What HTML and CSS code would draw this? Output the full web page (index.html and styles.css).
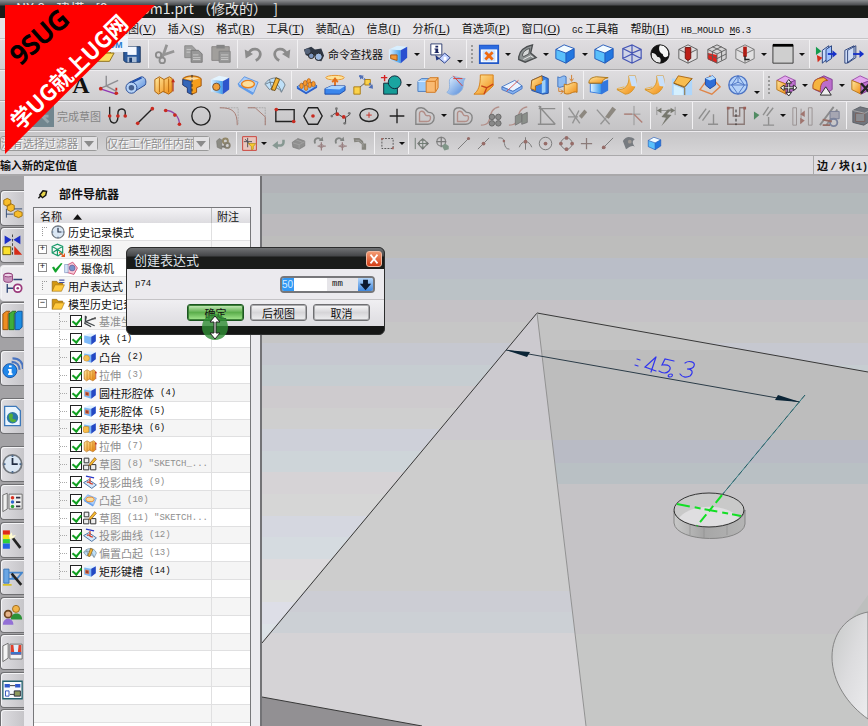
FILE: index.html
```html
<!DOCTYPE html>
<html lang="zh-CN">
<head>
<meta charset="utf-8">
<title>NX 8 - 建模</title>
<link rel="stylesheet" href="styles.css">
</head>
<body>
<svg class="defs" aria-hidden="true">
<defs>
<linearGradient id="gb" x1="0" y1="0" x2="1" y2="1"><stop offset="0" stop-color="#e4f3ff"/><stop offset="1" stop-color="#4a83d8"/></linearGradient>
<linearGradient id="go" x1="0" y1="0" x2="1" y2="1"><stop offset="0" stop-color="#ffe9a0"/><stop offset="1" stop-color="#f08a10"/></linearGradient>
<linearGradient id="gc" x1="0" y1="0" x2="1" y2="0"><stop offset="0" stop-color="#dff1ff"/><stop offset="1" stop-color="#3c9cec"/></linearGradient>
</defs>
<symbol id="open" viewBox="0 0 24 24"><path d="M2 20V5h7l2 3h8v3" fill="#e8b830" stroke="#8a6a10"/><path d="M2 20l5-9h16l-5 9z" fill="#fbdc62" stroke="#8a6a10"/></symbol>
<symbol id="save" viewBox="0 0 24 24"><path d="M3 4h18v17H5l-2-2z" fill="#2b5a9c" stroke="#17335e"/><path d="M7 4h10v9H7z" fill="#f4f8ff"/><path d="M7 15h10v6H7z" fill="#a9bdd6"/><path d="M9 16h3v5H9z" fill="#173a70"/></symbol>
<symbol id="cut" viewBox="0 0 24 24"><path d="M14 2L9 16M22 9L7 14" stroke="#959595" stroke-width="3" fill="none"/><circle cx="5" cy="13" r="3" fill="none" stroke="#8b8b8b" stroke-width="2"/><circle cx="9" cy="19" r="3" fill="none" stroke="#8b8b8b" stroke-width="2"/></symbol>
<symbol id="copy" viewBox="0 0 24 24"><path d="M3 3h8l4 4v9H3z" fill="#a0a0a0" stroke="#888"/><path d="M10 8h8l4 4v9H10z" fill="#989898" stroke="#777"/><path d="M5 7h5M5 10h4M12 13h6M12 16h8M12 18h8" stroke="#ccc"/></symbol>
<symbol id="paste" viewBox="0 0 24 24"><path d="M2 4h19v15H2z" fill="#a19f9c" stroke="#898785"/><path d="M7 2h9v4H7z" fill="#858585"/><path d="M10 9h12v12H10z" fill="#999" stroke="#828282"/><path d="M12 13h8M12 16h8M12 18h8" stroke="#c8c8c8"/></symbol>
<symbol id="undo" viewBox="0 0 24 24"><path d="M7 12C10 4 20 6 20 12c0 4-3 6-5 7" fill="none" stroke="#8b8b8b" stroke-width="3"/><path d="M3 7l1 10 8-5z" fill="#8b8b8b"/></symbol>
<symbol id="redo" viewBox="0 0 24 24"><path d="M17 12C14 4 4 6 4 12c0 4 3 6 5 7" fill="none" stroke="#8b8b8b" stroke-width="3"/><path d="M21 7l-1 10-8-5z" fill="#8b8b8b"/></symbol>
<symbol id="bino" viewBox="0 0 24 24"><path d="M1 7l8-3 4 3 7-1 3 8-3 6-5-1-3-6-5 2-4-2z" fill="#2f3744"/><circle cx="5" cy="9" r="3" fill="#55637a"/><circle cx="17" cy="15" r="4" fill="#9db9e0" stroke="#222"/><circle cx="9" cy="14" r="3" fill="#7b94bd" stroke="#222"/></symbol>
<symbol id="cubepart" viewBox="0 0 24 24"><path d="M2 7l9-4 11 1-7 4z" fill="#d8efff"/><path d="M2 7l13 1v14L2 18z" fill="url(#gc)"/><path d="M15 8l7-4v12l-7 6z" fill="#2a4fd0"/><path d="M4 13l7 0v6l-7-2z" fill="#f39a38" stroke="#a85410"/></symbol>
<symbol id="info" viewBox="0 0 24 24"><path d="M2 1h12v12H2z" fill="#fff" stroke="#28386c"/><path d="M7 3h3v2H7zM6 6h4v4h1v1H6v-1h1V7H6z" fill="#1a2560"/><path d="M11 17l6-6 6 5-6 6z" fill="#bfcfff" stroke="#223880"/><path d="M7 13l5 4-4 2z" fill="#223880"/><path d="M16 15h3v4h-3z" fill="#fff"/></symbol>
<symbol id="fit" viewBox="0 0 24 24"><path d="M2 3h20v19H2z" fill="#fff" stroke="#2258c8" stroke-width="2"/><path d="M2 3h20v4H2z" fill="#2c6ce0"/><path d="M5 8h14v12H5z" fill="#cfe4ff"/><path d="M8 10l8 8M16 10l-8 8" stroke="#f06a10" stroke-width="3"/></symbol>
<symbol id="persp" viewBox="0 0 24 24"><path d="M3 15C4 9 9 4 18 2l-2 9 6 5-12 5-7-3z" fill="#8d9293" stroke="#4b4e50" stroke-width="1.5"/><path d="M7 13c1-4 4-6 8-7l-1 6-6 3z" fill="#d6d8d9" stroke="#4b4e50"/><path d="M8 18l8-4 3 2" stroke="#eee" fill="none"/></symbol>
<symbol id="cube" viewBox="0 0 24 24"><path d="M2 7l9-5 11 4-9 5z" fill="#f2fbff"/><path d="M2 7l11 4v11L2 17z" fill="#5ac0fb"/><path d="M13 11l9-5v10l-9 6z" fill="#2277e0"/><path d="M2 7l9-5 11 4v10l-9 6-11-5zM2 7l11 4 9-5M13 11v11" fill="none" stroke="#1f57b8"/></symbol>
<symbol id="wire" viewBox="0 0 24 24"><path d="M2 6l10-4 10 5v10l-10 5L2 17zM2 6l10 5 10-4M12 11v11M12 2v10M2 17l10-5 10 5" fill="#c8d3f5" fill-opacity=".5" stroke="#4656b4" stroke-width="1.3"/></symbol>
<symbol id="bw" viewBox="0 0 24 24"><circle cx="12" cy="12" r="10" fill="#111"/><path d="M12 2a10 10 0 0 1 9 12c-3 3-6 1-6-2-4-1-5-6-3-10z" fill="#f5f5f5"/><path d="M3 11c3-1 5 2 6 4 3 0 5 3 3 7-6 0-10-5-9-11z" fill="#e8e8e8"/><circle cx="12" cy="12" r="10" fill="none" stroke="#111"/></symbol>
<symbol id="sec1" viewBox="0 0 24 24"><path d="M2 7l10-5 10 5v10l-10 5L2 17zM2 7l10 5 10-5M12 12v10" fill="#e1e0e1" stroke="#5b5b5b"/><path d="M9 5h6v12l-3 2-3-2z" fill="#bd2018" stroke="#6c100c"/></symbol>
<symbol id="sec2" viewBox="0 0 24 24"><path d="M2 7l10-5 10 5v10l-10 5L2 17z" fill="#d5d4d5"/><path d="M2 11l10 2v9L2 18z" fill="#e8201a"/><path d="M2 7l10-5 10 5v10l-10 5L2 17zM2 7l10 5 10-5M12 12v10M7 4l10 5v10M17 4L7 9v10M2 12l10 5 10-5" fill="none" stroke="#5b5b5b"/></symbol>
<symbol id="sec3" viewBox="0 0 24 24"><path d="M2 7l10-5 10 5v10l-10 5L2 17zM2 7l10 5 10-5M12 12v10" fill="#e1e0e1" stroke="#747474"/><path d="M10 4h4v11h-4z" fill="#b01c14"/><path d="M12 14v4h5" fill="none" stroke="#222" stroke-width="1.5"/></symbol>
<symbol id="swatch" viewBox="0 0 24 24"><path d="M1 2h22v20H1z" fill="#cfcfcf" stroke="#333"/><path d="M1 1h22v3H1z" fill="#000"/></symbol>
<symbol id="clip1" viewBox="0 0 24 24"><path d="M8 8l7-5v13l-7 6z" fill="#c9dcff" stroke="#223c78"/><path d="M12 7l6-4v14l-6 4z" fill="#9fc2ff" stroke="#223c78"/><path d="M14 12h6" stroke="#1530c8" stroke-width="2"/><path d="M19 8l5 4-5 4z" fill="#1530c8"/><path d="M1 4l6 5-6 4z" fill="#139a4c"/><path d="M2 13l6 3-5 5z" fill="#d42c1c"/></symbol>
<symbol id="clip2" viewBox="0 0 24 24"><path d="M2 8l10-5v13L4 22H2zM5 8v14M5 8l9-5v13l-9 6" fill="#cfdcf6" stroke="#2a4077"/><path d="M11 12h8" stroke="#1530c8" stroke-width="2"/><path d="M18 8l5 4-5 4z" fill="#1530c8"/></symbol>
<symbol id="axes" viewBox="0 0 24 24"><path d="M9 2v11l13-6M9 13L2 16M9 13l11 6" stroke="#8e8e92" stroke-width="1.5" fill="none"/><path d="M2 16l18 6" stroke="#9035b4" stroke-width="1.5"/><circle cx="3" cy="16" r="2" fill="#c92a20"/><circle cx="20" cy="21" r="2" fill="#c92a20"/><path d="M20 15v3" stroke="#c92a20" stroke-width="2"/></symbol>
<symbol id="pipe" viewBox="0 0 24 24"><path d="M5 9L18 3c4 0 6 5 4 9L9 20z" fill="url(#gb)" stroke="#234690"/><path d="M8 9l10-5" stroke="#1f4fae" stroke-width="2"/><ellipse cx="7" cy="15" rx="6" ry="6" fill="#b5d2f6" stroke="#234690"/><ellipse cx="7" cy="15" rx="3" ry="3" fill="#46608f"/></symbol>
<symbol id="extrude" viewBox="0 0 24 24"><path d="M2 6l5-3 5 3 6-3 3 2v14l-4 3-6-3-5 3-4-3z" fill="url(#go)" stroke="#a85e08"/><path d="M7 4v16M12 6v14M17 5v15" stroke="#b66a10"/><path d="M22 19V8" stroke="#c02a18"/><path d="M20 9l2-4 2 4z" fill="#c02a18"/></symbol>
<symbol id="revolve" viewBox="0 0 24 24"><path d="M2 5c4-4 16-4 20 0v8l-5 2v5l-5 2-5-2v-5l-5-3z" fill="#f69e1c" stroke="#9a4f08"/><path d="M2 6l9 2v14l-4-2v-5l-5-3z" fill="#3566b8" stroke="#20438c"/><path d="M4 5c4-2 12-2 16 0l-8 2z" fill="#fbd9a0"/><path d="M12 1v22" stroke="#222" stroke-dasharray="3 2"/></symbol>
<symbol id="hole" viewBox="0 0 24 24"><path d="M2 6l9-4 11 2-7 4z" fill="#e3f4ff"/><path d="M2 6l13 2v14L2 19z" fill="url(#gc)"/><path d="M15 8l7-4v13l-7 5z" fill="#2d55cc"/><circle cx="8" cy="14" r="4" fill="#f0a03a" stroke="#6c4a30"/></symbol>
<symbol id="emboss" viewBox="0 0 24 24"><path d="M1 11l7-8 15 6-5 12z" fill="#a8cdfb" stroke="#5b93de"/><path d="M1 11l17 10-1 2L2 14z" fill="#5f9cec"/><ellipse cx="12" cy="11" rx="7" ry="4" fill="#fddf9c" stroke="#e88020" stroke-width="1.5"/></symbol>
<symbol id="offset" viewBox="0 0 24 24"><path d="M1 11C5 3 19 1 23 12l-4 8c-2-5-9-7-13-3z" fill="#bfe0f8" stroke="#6c7c88"/><path d="M2 11c8-5 14 0 17 8M6 6l3 12" fill="none" stroke="#6c7c88"/><path d="M13 4l4 2-5 12-4-1z" fill="#f3b436" stroke="#6c4a10"/></symbol>
<symbol id="pattern" viewBox="0 0 24 24"><path d="M1 14l12-7 10 6-12 8z" fill="#8fc0fb" stroke="#2b62bc"/><path d="M1 14l10 6v2L1 16zM11 20l12-7v2l-12 7z" fill="#2d62cc"/><g fill="#f79a30" stroke="#b45c08" stroke-width=".7"><ellipse cx="6" cy="13" rx="2" ry="3"/><ellipse cx="10" cy="10" rx="2" ry="3"/><ellipse cx="11" cy="15" rx="2" ry="3"/><ellipse cx="14" cy="8" rx="2" ry="3"/><ellipse cx="15" cy="12" rx="2" ry="3"/><ellipse cx="19" cy="11" rx="2" ry="3"/></g></symbol>
<symbol id="scale" viewBox="0 0 24 24"><ellipse cx="12" cy="4" rx="10" ry="2.500" fill="#fce29a" stroke="#e79025"/><path d="M12 5v9M9 9l3-4 3 4" stroke="#e26d18" stroke-width="2" fill="none"/><path d="M1 16l7-3h15v5l-6 4H1z" fill="#3b86ec" stroke="#1b4aa8"/><path d="M1 16l7-3h15l-6 4z" fill="#a9d4ff"/></symbol>
<symbol id="move" viewBox="0 0 24 24"><path d="M9 14l6-5" stroke="#222" stroke-dasharray="2 1"/><path d="M2 14h7v8H2z" fill="#fbd24a" stroke="#a87a10"/><path d="M14 6h6v6h-6z" fill="#fbd24a" stroke="#a87a10"/><path d="M8 2l6 4M22 14l-3-4" stroke="#5070b8" stroke-width="2" stroke-dasharray="2 1"/><path d="M8 1l5 1-4 4zM23 16l-5-1 4-4z" fill="#5070b8"/></symbol>
<symbol id="unite" viewBox="0 0 24 24"><path d="M4 10h15v12H4z" fill="#159c97" stroke="#123"/><circle cx="16" cy="9" r="7" fill="#1aa5a0" stroke="#123"/><path d="M5 1v7M1 4h7" stroke="#d42020" stroke-width="1.500"/></symbol>
<symbol id="boxes" viewBox="0 0 24 24"><path d="M1 8l4-3h9v9l-3 5H1z" fill="#9ccaf8" stroke="#4678c0"/><path d="M1 8h11v11" fill="none" stroke="#e8f4ff"/><path d="M10 8l4-4h9v11l-3 5H10z" fill="#f9ba72" stroke="#d0761c"/><path d="M10 8h10v11M20 8l3-4" fill="none" stroke="#d0761c"/></symbol>
<symbol id="trim" viewBox="0 0 24 24"><path d="M5 6c4-6 9-1 17-1-4 5 0 9-5 14-5 5-10 5-15 1 5-4 2-9 3-14z" fill="url(#gb)" stroke="#8fb0dc"/><path d="M9 2l10 11M9 5h10" stroke="#da3a30" fill="none"/></symbol>
<symbol id="bend" viewBox="0 0 24 24"><path d="M8 1h14v12L12 22 1 22c5-4 7-9 7-21z" fill="url(#go)" stroke="#d47c10"/><path d="M9 13l6 2 7-4M15 15l-3 7" stroke="#c84418" fill="none" stroke-width="1.500"/></symbol>
<symbol id="split" viewBox="0 0 24 24"><path d="M1 14l14-7 8 6-10 6z" fill="#eaf3ff" stroke="#4877c4"/><path d="M1 14l12 5 10-6v3l-10 6-12-5z" fill="#85b2f2" stroke="#4877c4"/><path d="M6 19L19 7" stroke="#d6504c"/></symbol>
<symbol id="shell" viewBox="0 0 24 24"><path d="M3 7l11-5 7 3v16l-6 1-12-4z" fill="#3b7fe0" stroke="#204c9c"/><path d="M3 7l11-5 1 8-8 3v5l-5-2z" fill="url(#go)" stroke="#a46010"/><path d="M14 8l4-2v14l-4 1z" fill="#9ed0f8"/></symbol>
<symbol id="thick" viewBox="0 0 24 24"><path d="M2 3c3 3 5-3 9 0v11c-4-2-6 2-9 0z" fill="#8ebcf2" stroke="#3d70bc"/><path d="M9 11c5 3 8-4 14-1v10c-5-2-8 4-14 1z" fill="url(#go)" stroke="#bc7010"/><path d="M3 15v4h5M5 22l3-3-3-2M17 1v6M15 5l2 3 2-3" stroke="#d27c28" fill="none"/></symbol>
<symbol id="blend" viewBox="0 0 24 24"><path d="M2 9h13v13L2 20zM15 9l7-3v12l-7 4z" fill="#3277de"/><path d="M3 11h11v10l-11-2z" fill="url(#gc)"/><path d="M1 10c0-5 3-6 8-7l13 1c-4 1-6 2-7 6z" fill="url(#go)" stroke="#a87214"/></symbol>
<symbol id="sheet" viewBox="0 0 24 24"><path d="M14 2h7c3 10-3 20-11 20l-9-5c9 1 14-5 13-15z" fill="url(#go)" stroke="#d49428"/><path d="M14 2h7l2 12-6-1z" fill="#c9e0fb"/><path d="M1 16l8-2" stroke="#e8b050"/></symbol>
<symbol id="chamfer" viewBox="0 0 24 24"><path d="M1 5h22v18H1z" fill="#aed6fb"/><path d="M3 12l10 4v7H3z" fill="#d4f0ff"/><path d="M3 10L8 2l15 3-8 9z" fill="#f8bd50" stroke="#aa6512"/><path d="M3 10l12 5v8M15 14l8-9" stroke="#8a6020" fill="none"/></symbol>
<symbol id="draft" viewBox="0 0 24 24"><path d="M12 2L1 17l13 5 9-8z" fill="none" stroke="#df8548" stroke-width="1.500"/><path d="M7 5l8-3 3 3v7l-6 4-5-4z" fill="#2f6ed8" stroke="#1c48a0"/><path d="M7 5l8-3 3 3-6 2z" fill="#b5ddff"/></symbol>
<symbol id="globe" viewBox="0 0 24 24"><circle cx="12" cy="12" r="10" fill="#b5d2f8" stroke="#4d74c4" stroke-width="1.500"/><path d="M12 2L5 12l7 10 7-10zM2 12h20M5 12l7-3 7 3M12 9V2" fill="none" stroke="#4d74c4"/></symbol>
<symbol id="pcube" viewBox="0 0 24 24"><path d="M2 7l9-5 11 5-10 4z" fill="#e3a8ee" stroke="#9a4ca8"/><path d="M2 7l10 4v11L2 17z" fill="url(#go)" stroke="#b87414"/><path d="M12 11l10-4v10l-10 5z" fill="#c072d0" stroke="#803c90"/></symbol>
<symbol id="pmove" viewBox="0 0 24 24"><use href="#pcube"/><path d="M8 15h14M15 9v12" stroke="#222" stroke-width="3"/><path d="M9 15h12M15 10v10" stroke="#fff" stroke-width="1"/><path d="M15 6l3 4h-6zM15 24l3-4h-6zM6 15l4-3v6zM24 15l-4-3v6z" fill="#fff" stroke="#222"/></symbol>
<symbol id="pblend" viewBox="0 0 24 24"><path d="M3 7l10-5 9 4v11l-8 5L3 17z" fill="#bb6dcc" stroke="#803c90"/><path d="M1 12c1-6 6-8 12-8l4 3c-7 0-8 6-8 12l-8-3z" fill="#f6b440" stroke="#a8481c"/><path d="M15 14l6 9H9z" fill="#eee" stroke="#222"/></symbol>
<symbol id="pdel" viewBox="0 0 24 24"><use href="#pcube"/><path d="M12 10l10 11M22 10L12 21" stroke="#222" stroke-width="2.500"/></symbol>
<symbol id="fin" viewBox="0 0 24 24"><path d="M0 0h24v24H0z" fill="#71868f"/><path d="M5 17L17 5M5 6l13 13M5 12h13" stroke="#97a7ad" stroke-width="3"/></symbol>
<symbol id="profile" viewBox="0 0 24 24"><path d="M4 2v10c0 10 9 10 9 1V9c0-6 8-6 8-1v4" fill="none" stroke="#222" stroke-width="1.500"/><g fill="#c82a20"><circle cx="4" cy="12" r="2"/><circle cx="13" cy="12" r="2"/><circle cx="21" cy="12" r="2"/></g></symbol>
<symbol id="line" viewBox="0 0 24 24"><path d="M4 20L20 4" stroke="#222" stroke-width="1.500"/><circle cx="4" cy="20" r="2" fill="#c82a20"/><circle cx="20" cy="4" r="2" fill="#c82a20"/></symbol>
<symbol id="arc" viewBox="0 0 24 24"><path d="M4 6c9 0 15 7 15 15" fill="none" stroke="#9446a8" stroke-width="1.500"/><g fill="#c82a20"><circle cx="4" cy="6" r="2"/><circle cx="14" cy="11" r="2"/><circle cx="19" cy="21" r="2"/></g></symbol>
<symbol id="circle" viewBox="0 0 24 24"><circle cx="12" cy="12" r="10" fill="none" stroke="#222" stroke-width="1.500"/></symbol>
<symbol id="fillet" viewBox="0 0 24 24"><path d="M2 3h20v19" stroke="#aaa" fill="none" stroke-dasharray="2 1"/><path d="M2 3c14 0 19 4 19 19" stroke="#a5786e" fill="none"/></symbol>
<symbol id="cham2" viewBox="0 0 24 24"><path d="M2 3h19v19" stroke="#a5a5a5" fill="none" stroke-dasharray="2 1"/><path d="M2 3h8l11 10v9" stroke="#a5786e" fill="none"/></symbol>
<symbol id="rect" viewBox="0 0 24 24"><path d="M2 5h20v13H2z" fill="none" stroke="#222" stroke-width="1.500"/><circle cx="2.500" cy="5" r="2" fill="#c82a20"/><circle cx="21.500" cy="18" r="2" fill="#c82a20"/></symbol>
<symbol id="hex" viewBox="0 0 24 24"><path d="M7 3h10l5 9-5 9H7l-5-9z" fill="none" stroke="#222" stroke-width="1.500"/><circle cx="12" cy="12" r="2" fill="#c82a20"/></symbol>
<symbol id="spline" viewBox="0 0 24 24"><path d="M2 12c5-5 5-3 10 0s6 1 10-2M7 10V4M17 14v6" fill="none" stroke="#333"/><g fill="#c82a20"><circle cx="8" cy="10" r="2"/><circle cx="15" cy="13" r="2"/></g><g fill="#777"><circle cx="2" cy="12" r="1.500"/><circle cx="7" cy="4" r="1.500"/><circle cx="16" cy="20" r="1.500"/><circle cx="21" cy="9" r="1.500"/></g></symbol>
<symbol id="ellipse" viewBox="0 0 24 24"><ellipse cx="12" cy="11" rx="10" ry="7" fill="none" stroke="#222" stroke-width="1.500"/><path d="M12 8v6M9 11h6" stroke="#c82a20"/></symbol>
<symbol id="plus" viewBox="0 0 24 24"><path d="M12 4v16M4 12h16" stroke="#222" stroke-width="1.500"/></symbol>
<symbol id="curve" viewBox="0 0 24 24"><path d="M2 21V8c0-4 3-5 6-5 5 0 6 5 8 5s6 1 6 6-4 7-7 7z" fill="none" stroke="#858585" stroke-width="1.500"/><path d="M6 18V9c0-3 5-3 6 1s6-1 6 4-4 4-6 4z" fill="none" stroke="#b28e88" stroke-width="1.500"/></symbol>
<symbol id="pat2" viewBox="0 0 24 24"><path d="M1 22c16 0 4-17 20-20" stroke="#b28e88" fill="none" stroke-width="1.500"/><g fill="#898989" stroke="#666"><circle cx="13" cy="13" r="3"/><circle cx="20" cy="13" r="3"/><circle cx="13" cy="20" r="3"/><circle cx="20" cy="20" r="3"/></g></symbol>
<symbol id="proj" viewBox="0 0 24 24"><path d="M1 22c16 0 4-17 20-20" stroke="#b28e88" fill="none" stroke-width="1.500"/><path d="M8 12l7-3v9l-7 4zM15 11l6-3v11l-6 2z" fill="#8a8f8a" stroke="#777"/></symbol>
<symbol id="inter" viewBox="0 0 24 24"><path d="M3 4h18M5 1v20M2 21h19M3 1l18 20" stroke="#8c8c8c" fill="none" stroke-width="1.500"/></symbol>
<symbol id="ctrim" viewBox="0 0 24 24"><path d="M2 3l12 17M1 13h11M13 6L6 20" stroke="#949494" fill="none" stroke-width="1.500"/><path d="M13 12l6-7 3 3-6 7z" fill="#8d8880"/></symbol>
<symbol id="cext" viewBox="0 0 24 24"><path d="M2 5l14 16M12 14L6 21" stroke="#949494" fill="none" stroke-width="1.500"/><path d="M11 13l8-11 4 3-8 10z" fill="#8d8880"/></symbol>
<symbol id="corner" viewBox="0 0 24 24"><path d="M2 10h17M12 1v21" stroke="#949494" fill="none"/><path d="M12 10l9 9M1 10h9" stroke="#b08078" stroke-width="1.500"/></symbol>
<symbol id="dim" viewBox="0 0 24 24"><path d="M2 2v9M22 2v9M3 6h18" stroke="#8f8f8f"/><path d="M2 6l5-3v6zM22 6l-5-3v6zM14 5L7 13l5 1-5 9 11-12-5-1 5-5z" fill="#77786f"/></symbol>
<symbol id="cons" viewBox="0 0 24 24"><path d="M2 15L10 4M6 17L14 6M18 10v11M12 21h11" stroke="#8f8f8f" fill="none" stroke-width="1.500"/></symbol>
<symbol id="symm" viewBox="0 0 24 24"><path d="M3 3v18h18V3h-5v9H9V3z" fill="none" stroke="#8b7b78" stroke-width="1.500"/><path d="M12 5v17" stroke="#222" stroke-dasharray="3 2"/><path d="M2 2h3v3H2zM20 2h3v3h-3z" fill="#9c5f58"/></symbol>
<symbol id="showc" viewBox="0 0 24 24"><path d="M1 7l6 4-6 5z" fill="#508b62"/><path d="M11 11L17 2M15 12l7-9M17 13v9M11 22h12" stroke="#8f8f8f" fill="none" stroke-width="1.500"/></symbol>
<symbol id="auto" viewBox="0 0 24 24"><path d="M2 3v19M6 3v19M19 3v19M23 3v19" stroke="#989090"/><path d="M2 3h4M2 22h4M19 3h4M19 22h4M11 4v16" stroke="#989090"/><path d="M15 6l-5 4 5 3zM10 14l5 3-5 4z" fill="#a0756f"/></symbol>
<symbol id="anim" viewBox="0 0 24 24"><path d="M1 22L16 2M8 22L20 5" stroke="#8c8c8c" stroke-width="2"/><path d="M12 7h10v8H12z" fill="#a6a6b2" stroke="#777d95"/><circle cx="16" cy="19" r="4" fill="none" stroke="#7b839d" stroke-width="2"/><path d="M4 16l10 2M4 22h8" stroke="#956d66" stroke-width="2"/></symbol>
<symbol id="gcube" viewBox="0 0 24 24"><path d="M2 6l8-4 12 3v12l-8 5L2 19z" fill="#71757d" stroke="#5b5f66"/><path d="M5 9h10v9H5z" fill="#8b8d92" stroke="#775f5b"/><path d="M2 6l13 3 7-4" stroke="#aaa" fill="none"/></symbol>
<symbol id="gblob" viewBox="0 0 24 24"><path d="M2 10l9-6 11 4v8l-9 5-10-3z" fill="#8f8f8f" stroke="#777"/><path d="M3 11l10 3 9-5M13 14v7M8 6l10 4" stroke="#aaa" fill="none"/></symbol>
<symbol id="snapmap" viewBox="0 0 24 24"><path d="M1 8l4-4 4 2v15l-7-3z" fill="#8b8b84" stroke="#77756e"/><circle cx="15" cy="8" r="4" fill="none" stroke="#918668" stroke-width="3"/><circle cx="18" cy="15" r="4" fill="none" stroke="#857f70" stroke-width="3"/><path d="M9 17h6" stroke="#77756e" stroke-width="3"/></symbol>
<symbol id="filter" viewBox="0 0 24 24"><path d="M1 1h22v22H1z" fill="#e7c5bd" stroke="#cb4038" stroke-width="1.500"/><path d="M9 3v15M3 9h13M5 5l8 9" stroke="#4c5058" stroke-width="1.500"/><path d="M10 12h12l-4 5v4l-3 1v-5z" fill="#f6ca30" stroke="#ae8610"/></symbol>
<symbol id="gback" viewBox="0 0 24 24"><path d="M20 6c1 10-4 10-11 9" fill="none" stroke="#869892" stroke-width="4"/><path d="M2 15l9-7v13z" fill="#869892"/></symbol>
<symbol id="grot" viewBox="0 0 24 24"><path d="M5 12C2 4 10 1 14 6" fill="none" stroke="#828583" stroke-width="3"/><path d="M11 8h7l-1-7z" fill="#828583"/><path d="M15 10v13M9 16h13" stroke="#998081" stroke-width="2"/><circle cx="15" cy="16" r="3" fill="none" stroke="#998081"/></symbol>
<symbol id="ghook" viewBox="0 0 24 24"><path d="M1 3h9l6 5 1 4h4v10h-7v-9l-5-4-7 1z" fill="#86857e"/><path d="M4 7h6l6 6v5" stroke="#aaa" fill="none"/></symbol>
<symbol id="marq" viewBox="0 0 24 24"><path d="M3 4h18v16H3z" fill="none" stroke="#555" stroke-width="1.500" stroke-dasharray="3 2"/><path d="M2 3h3v3H2zM19 18h3v3h-3z" fill="#a36860"/></symbol>
<symbol id="target" viewBox="0 0 24 24"><path d="M14 3l4 4h-8zM14 22l4-4h-8zM5 12l4-4v8zM24 12l-4-4v8z" fill="#707272"/><circle cx="14" cy="12" r="6" fill="none" stroke="#7b817b" stroke-width="2"/><path d="M14 7v11M8 12h12M2 3v18" stroke="#6c7a70" stroke-width="1.500"/></symbol>
<symbol id="target2" viewBox="0 0 24 24"><circle cx="10" cy="9" r="7" fill="none" stroke="#858585" stroke-width="2"/><path d="M10 1v17M2 9h16" stroke="#7b7b7b" stroke-width="2"/><path d="M11 16l5-4 6 4v5l-7 2z" fill="#809688"/></symbol>
<symbol id="send" viewBox="0 0 24 24"><path d="M3 21L20 4" stroke="#777" stroke-width="1.500"/><circle cx="20" cy="4" r="2.500" fill="#966c68"/></symbol>
<symbol id="smid" viewBox="0 0 24 24"><path d="M3 21L21 3" stroke="#777" stroke-width="1.500"/><circle cx="12" cy="12" r="3" fill="#966c68"/></symbol>
<symbol id="son" viewBox="0 0 24 24"><path d="M3 21L21 3" stroke="#777" stroke-width="1.500"/><circle cx="6" cy="18" r="3" fill="#966c68"/></symbol>
<symbol id="stan" viewBox="0 0 24 24"><path d="M2 3h4c9 0 2 18 14 18" fill="none" stroke="#777" stroke-width="1.500"/><circle cx="11" cy="8" r="2" fill="#966c68"/></symbol>
<symbol id="sint" viewBox="0 0 24 24"><path d="M2 18c4-12 16-12 20 0M12 2v20" fill="none" stroke="#777" stroke-width="1.500"/><circle cx="12" cy="9" r="3" fill="#966c68"/></symbol>
<symbol id="scen" viewBox="0 0 24 24"><circle cx="12" cy="12" r="10" fill="none" stroke="#777" stroke-width="1.500"/><circle cx="12" cy="12" r="3" fill="#966c68"/></symbol>
<symbol id="squad" viewBox="0 0 24 24"><circle cx="12" cy="12" r="9" fill="none" stroke="#777" stroke-width="1.500"/><g fill="#966c68"><circle cx="12" cy="3" r="3"/><circle cx="12" cy="21" r="3"/><circle cx="3" cy="12" r="3"/><circle cx="21" cy="12" r="3"/></g></symbol>
<symbol id="spt" viewBox="0 0 24 24"><path d="M12 3v18M3 12h18" stroke="#8b7b79" stroke-width="2"/></symbol>
<symbol id="sface" viewBox="0 0 24 24"><path d="M3 8c5-9 13-7 19-3-6 4-2 9 0 12-8-3-9 3-14 4z" fill="#777b80"/><circle cx="14" cy="9" r="3" fill="#a09a95"/></symbol>
<symbol id="clock" viewBox="0 0 24 24"><circle cx="12" cy="12" r="10.500" fill="#dbe7f4" stroke="#71767c" stroke-width="2"/><path d="M12 5v7h6" stroke="#222e44" stroke-width="2" fill="none"/><path d="M12 2v2M12 20v2M2 12h2M20 12h2" stroke="#48678c" stroke-width="2"/></symbol>
<symbol id="views" viewBox="0 0 24 24"><path d="M2 6l9-4 9 4v11l-8 5-10-5zM2 6l9 5 9-5M11 11v11M2 17l9-6 9 6" fill="none" stroke="#199a68" stroke-width="2"/><path d="M14 16l9 7M23 18v5h-5" stroke="#e25a20" stroke-width="2" fill="none"/></symbol>
<symbol id="camera" viewBox="0 0 24 24"><path d="M3 8l12-6 8 10-6 11-14-4z" fill="#f8c8d6" stroke="#cb4b70" stroke-width="1.500"/><path d="M1 6h6v14H1z" fill="#d6e3f6" stroke="#7590bd"/><circle cx="14" cy="12" r="5" fill="#7893c9" stroke="#654a8c"/></symbol>
<symbol id="tick" viewBox="0 0 24 24"><path d="M2 12l4-2 3 5L20 3l3 1L10 22H8z" fill="#12a32c"/></symbol>
<symbol id="folder" viewBox="0 0 24 24"><path d="M2 21V4h8l2 3h8v4" fill="#d29712" stroke="#8a5d08"/><path d="M2 21l5-11h16l-5 11z" fill="#ffc93c" stroke="#9c6c0c"/></symbol>
<symbol id="folder2" viewBox="0 0 24 24"><use href="#folder"/><path d="M14 1h9v2h-9zM14 5h9v2h-9z" fill="#4450a0"/></symbol>
<symbol id="csys" viewBox="0 0 24 24"><path d="M4 3v10l16 7M4 13l17-6M6 4l-3 12 11 6" fill="none" stroke="#3e4448" stroke-width="2"/><path d="M12 9l10-4v4z" fill="#555"/></symbol>
<symbol id="fcube" viewBox="0 0 24 24"><path d="M2 6l9-4 11 2-8 4z" fill="#e0f2ff"/><path d="M2 6l12 2v14L2 18z" fill="#7cb8f8"/><path d="M14 8l8-4v12l-8 6z" fill="#2349c4"/></symbol>
<symbol id="fboss" viewBox="0 0 24 24"><use href="#fcube"/><circle cx="6" cy="14" r="5" fill="#f5c052" stroke="#d98f20"/></symbol>
<symbol id="fpock" viewBox="0 0 24 24"><use href="#fcube"/><path d="M4 10l6 1v6l-6-1z" fill="#a63f28" stroke="#f09060"/></symbol>
<symbol id="fpad" viewBox="0 0 24 24"><use href="#fcube"/><path d="M0 11l3-2 7 1v9l-7 1-3-2z" fill="#f9bd48" stroke="#b97b14"/></symbol>
<symbol id="sketch" viewBox="0 0 24 24"><path d="M2 2h8v8H2zM1 14h9v8H1zM13 13h9v9h-9z" fill="#eee" stroke="#333" stroke-width="1.700"/><path d="M11 12l9-11 3 3-9 10-4 1z" fill="#f6bd2e" stroke="#7a3a10"/></symbol>
<symbol id="pcurve" viewBox="0 0 24 24"><path d="M1 13l9-5 13 9-8 6z" fill="#d5e8fb" stroke="#3e679c" stroke-width="1.500"/><path d="M5 2l14 3" stroke="#2836c4" stroke-width="2"/><path d="M12 5v8M7 13c3-4 5 4 10 2" stroke="#d33d28" stroke-width="2" fill="none"/></symbol>
<symbol id="tasm" viewBox="0 0 24 24"><path d="M2 3l4-2 4 2v5l-4 2-4-2zM6 9l4-2 4 2v5l-4 2-4-2z" fill="#f8bd2a" stroke="#9c6a08"/><path d="M5 13v10M5 19h8M14 13h9" stroke="#27406c"/><path d="M14 17l4-2 5 2v4l-4 2-5-2z" fill="#f8bd2a" stroke="#9c6a08"/></symbol>
<symbol id="tcon" viewBox="0 0 24 24"><path d="M3 1l8 5-8 5zM21 1l-8 5 8 5z" fill="#1d2fc6"/><path d="M12 0v24" stroke="#333" stroke-dasharray="3 2"/><path d="M1 14h9v9H1z" fill="#fbe02c" stroke="#605008"/><path d="M14 23V13l9 10z" fill="#d62c18"/></symbol>
<symbol id="tpart" viewBox="0 0 24 24"><path d="M2 3c0-3 10-3 10 0v6c0 3-10 3-10 0z" fill="#c995bd" stroke="#8c3672"/><ellipse cx="7" cy="3" rx="5" ry="2" fill="#efd3e8" stroke="#8c3672"/><path d="M6 13v10M6 18h7M13 8h10" stroke="#2d4574" stroke-width="1.500"/><circle cx="18" cy="18" r="4.500" fill="#fff" stroke="#9b3a7c" stroke-width="2"/><circle cx="18" cy="18" r="1.500" fill="#9b3a7c"/></symbol>
<symbol id="tbooks" viewBox="0 0 24 24"><path d="M1 5l4-3h4l-2 3v18H1z" fill="#ef8d22" stroke="#8c4b08"/><path d="M8 5l4-3h4l-2 3v18H8z" fill="#3fae3a" stroke="#1c6418"/><path d="M15 5l3-3h5v18l-3 3h-5z" fill="#1c8de4" stroke="#0c4c90"/></symbol>
<symbol id="tinfo" viewBox="0 0 24 24"><path d="M11 5c6 0 9 4 9 9M12 1c8 0 12 5 12 12" fill="none" stroke="#4a74c0" stroke-width="2.500"/><circle cx="9" cy="15" r="8" fill="#2186e8" stroke="#0e4ea4"/><path d="M8 9h3v2H8zM7 13h4v5h1v2H7v-2h1v-3H7z" fill="#fff"/></symbol>
<symbol id="tweb" viewBox="0 0 24 24"><path d="M3 1h13l5 5v17H3z" fill="#eaf5ff" stroke="#3c78ba" stroke-width="1.500"/><circle cx="12" cy="14" r="6.500" fill="#2c78a8"/><path d="M8 10c5-3 5 2 4 4s5 1 4 4c-6 4-9-3-8-8z" fill="#55b038"/></symbol>
<symbol id="tpal" viewBox="0 0 24 24"><path d="M1 4l5-2v18l-5 3zM8 3h15v17H8z" fill="#efefef" stroke="#666"/><circle cx="12" cy="7" r="2" fill="#d83222"/><circle cx="12" cy="12" r="2" fill="#2d66d0"/><circle cx="12" cy="17" r="2" fill="#2ca038"/><path d="M16 7h5M16 12h5M16 17h5" stroke="#334" stroke-width="2"/></symbol>
<symbol id="twand" viewBox="0 0 24 24"><path d="M1 1h8v5H1z" fill="#e02818"/><path d="M1 6h8v5H1z" fill="#f6e31a"/><path d="M1 11h8v5H1z" fill="#2fcf3c"/><path d="M1 16h8v6H1z" fill="#2462e4"/><path d="M11 8l10 13" stroke="#222" stroke-width="3"/><path d="M11 3l1 4 4-1-3 4-4 1-1-4z" fill="#fffbd2"/></symbol>
<symbol id="tmach" viewBox="0 0 24 24"><path d="M2 3h6v16H2z" fill="#6aa6e4" stroke="#3370b4"/><path d="M8 7h15l-6 7H8M12 8v6" fill="none" stroke="#4686cc" stroke-width="2"/><path d="M11 8l11 13" stroke="#222" stroke-width="3"/><path d="M1 21h10" stroke="#d8c22a" stroke-width="2"/></symbol>
<symbol id="tusers" viewBox="0 0 24 24"><circle cx="16" cy="5" r="4" fill="#f2b54a" stroke="#9b6514"/><path d="M10 17c0-9 13-9 13 0z" fill="#2c9238"/><circle cx="7" cy="11" r="4" fill="#e6b48a" stroke="#6e4620" stroke-width="2"/><path d="M1 23c0-9 12-9 12 0z" fill="#9370d6"/></symbol>
<symbol id="tbook" viewBox="0 0 24 24"><path d="M1 5l6-3v17l-6 4zM9 3h14v17H9z" fill="#f4f4f4" stroke="#666"/><path d="M10 4h12v11H10z" fill="#e0402c"/><path d="M13 4h6l-1 9h-4z" fill="#dfeefc"/><path d="M10 12h12v3H10z" fill="#3c74c8"/></symbol>
<symbol id="tgrid" viewBox="0 0 24 24"><path d="M1 2h22v20H1z" fill="#f7fafc" stroke="#23606c" stroke-width="1.500"/><path d="M3 5h6v4H3zM15 5h6v4h-6z" fill="#3158cc"/><path d="M9 7h6M9 17h5" stroke="#222"/><path d="M4 13h4v6H4z" fill="#fff" stroke="#2448b8"/><path d="M14 13h7v6h-7z" fill="#8d9a5c" stroke="#223"/></symbol>
</svg>

<div class="app">
<header class="title"><h1>NX 8 - 建模 - [9sug.com1.prt （修改的）&nbsp; ]</h1></header>
<nav class="menu">
<a href="#">视图<i>(<u>V</u>)</i></a><a href="#">插入<i>(<u>S</u>)</i></a><a href="#">格式<i>(<u>R</u>)</i></a><a href="#">工具<i>(<u>T</u>)</i></a><a href="#">装配<i>(<u>A</u>)</i></a><a href="#">信息<i>(<u>I</u>)</i></a><a href="#">分析<i>(<u>L</u>)</i></a><a href="#">首选项<i>(<u>P</u>)</i></a><a href="#">窗口<i>(<u>O</u>)</i></a><a href="#"><b>GC</b> 工具箱</a><a href="#">帮助<i>(<u>H</u>)</i></a><a href="#"><b>HB_MOULD <u>M</u>6.3</b></a>
</nav>

<div class="bar one">
<button aria-label="打开"><svg><use href="#open"/></svg></button><button aria-label="保存"><svg><use href="#save"/></svg></button><s></s>
<button aria-label="剪切"><svg><use href="#cut"/></svg></button><button aria-label="复制"><svg><use href="#copy"/></svg></button><button aria-label="粘贴"><svg><use href="#paste"/></svg></button><s></s>
<button aria-label="撤消"><svg><use href="#undo"/></svg></button><button aria-label="重做"><svg><use href="#redo"/></svg></button><s></s>
<button aria-label="查找"><svg><use href="#bino"/></svg></button><span class="finder">命令查找器</span><button aria-label="部件"><svg><use href="#cubepart"/></svg></button><em></em><s></s>
<button aria-label="信息"><svg><use href="#info"/></svg></button><em class="low"></em><s></s><s class="grip"></s>
<button aria-label="适合窗口"><svg><use href="#fit"/></svg></button><em></em><button aria-label="透视"><svg><use href="#persp"/></svg></button><em></em><button aria-label="定向"><svg><use href="#cube"/></svg></button><em></em>
<button aria-label="着色"><svg><use href="#cube"/></svg></button><button aria-label="线框"><svg><use href="#wire"/></svg></button><button aria-label="艺术外观"><svg><use href="#bw"/></svg></button><button aria-label="面分析"><svg><use href="#sec1"/></svg></button><button aria-label="局部着色"><svg><use href="#sec2"/></svg></button><button aria-label="截面"><svg><use href="#sec3"/></svg></button><em></em>
<button aria-label="背景"><svg><use href="#swatch"/></svg></button><em></em><s></s><button aria-label="编辑截面"><svg><use href="#clip1"/></svg></button><button aria-label="剪切截面"><svg><use href="#clip2"/></svg></button>
</div>

<div class="bar two">
<button aria-label="文本"><span class="glyph">A</span></button><button aria-label="基准"><svg><use href="#axes"/></svg></button><button aria-label="管道"><svg><use href="#pipe"/></svg></button><button aria-label="拉伸"><svg><use href="#extrude"/></svg></button><button aria-label="回转"><svg><use href="#revolve"/></svg></button><button aria-label="孔"><svg><use href="#hole"/></svg></button><button aria-label="凸起"><svg><use href="#emboss"/></svg></button><button aria-label="偏置凸起"><svg><use href="#offset"/></svg></button><s></s>
<button aria-label="阵列"><svg><use href="#pattern"/></svg></button><button aria-label="缩放"><svg><use href="#scale"/></svg></button><button aria-label="移动"><svg><use href="#move"/></svg></button><button aria-label="求和"><svg><use href="#unite"/></svg></button><em></em>
<button aria-label="包裹"><svg><use href="#boxes"/></svg></button><button aria-label="修剪体"><svg><use href="#trim"/></svg></button><button aria-label="弯曲"><svg><use href="#bend"/></svg></button><button aria-label="拆分"><svg><use href="#split"/></svg></button><button aria-label="抽壳"><svg><use href="#shell"/></svg></button><button aria-label="加厚"><svg><use href="#thick"/></svg></button><s></s>
<button aria-label="边倒圆"><svg><use href="#blend"/></svg></button><button aria-label="面倒圆"><svg><use href="#sheet"/></svg></button><button aria-label="软倒圆"><svg><use href="#sheet"/></svg></button><button aria-label="倒斜角"><svg><use href="#chamfer"/></svg></button><button aria-label="拔模"><svg><use href="#draft"/></svg></button><button aria-label="体"><svg><use href="#globe"/></svg></button><em class="low"></em><s></s><s class="grip"></s>
<button aria-label="移动面"><svg><use href="#pmove"/></svg></button><em></em><button aria-label="调整圆角"><svg><use href="#pblend"/></svg></button><em></em><button aria-label="删除面"><svg><use href="#pdel"/></svg></button>
</div>

<div class="bar three">
<button class="finish"><svg><use href="#fin"/></svg><span>完成草图</span></button>
<button aria-label="轮廓"><svg><use href="#profile"/></svg></button><button aria-label="直线"><svg><use href="#line"/></svg></button><button aria-label="圆弧"><svg><use href="#arc"/></svg></button><button aria-label="圆"><svg><use href="#circle"/></svg></button><button aria-label="圆角"><svg><use href="#fillet"/></svg></button><button aria-label="倒角"><svg><use href="#cham2"/></svg></button><button aria-label="矩形"><svg><use href="#rect"/></svg></button><button aria-label="多边形"><svg><use href="#hex"/></svg></button><button aria-label="样条"><svg><use href="#spline"/></svg></button><button aria-label="椭圆"><svg><use href="#ellipse"/></svg></button><button aria-label="点"><svg><use href="#plus"/></svg></button><button aria-label="偏置曲线"><svg><use href="#curve"/></svg></button><em></em>
<button aria-label="派生"><svg><use href="#curve"/></svg></button><button aria-label="阵列曲线"><svg><use href="#pat2"/></svg></button><button aria-label="投影曲线"><svg><use href="#proj"/></svg></button><button aria-label="交点"><svg><use href="#inter"/></svg></button><s></s>
<button aria-label="快速修剪"><svg><use href="#ctrim"/></svg></button><button aria-label="快速延伸"><svg><use href="#cext"/></svg></button><button aria-label="拐角"><svg><use href="#corner"/></svg></button><s></s><button aria-label="尺寸"><svg><use href="#dim"/></svg></button><em></em><s></s>
<button aria-label="约束"><svg><use href="#cons"/></svg></button><button aria-label="对称"><svg><use href="#symm"/></svg></button><button aria-label="显示约束"><svg><use href="#showc"/></svg></button><em></em><button aria-label="自动约束"><svg><use href="#auto"/></svg></button><button aria-label="动画"><svg><use href="#anim"/></svg></button><s></s><button aria-label="视图方位"><svg><use href="#gcube"/></svg></button>
</div>

<div class="bar four">
<span class="combo"><select disabled aria-label="选择过滤器"><option>没有选择过滤器</option></select></span>
<span class="combo wide"><select disabled aria-label="选择范围"><option>仅在工作部件内部</option></select></span>
<div class="snaps">
<button aria-label="关联"><svg><use href="#snapmap"/></svg></button><s></s><button aria-label="过滤"><svg><use href="#filter"/></svg></button><em></em><button aria-label="返回"><svg><use href="#gback"/></svg></button><button aria-label="体"><svg><use href="#gblob"/></svg></button><button aria-label="旋转"><svg><use href="#grot"/></svg></button><button aria-label="平移"><svg><use href="#grot"/></svg></button><button aria-label="链"><svg><use href="#ghook"/></svg></button><s></s><button aria-label="框选"><svg><use href="#marq"/></svg></button><em></em><s></s>
<button aria-label="捕捉"><svg><use href="#target"/></svg></button><button aria-label="捕捉点"><svg><use href="#target2"/></svg></button><button aria-label="端点"><svg><use href="#send"/></svg></button><button aria-label="中点"><svg><use href="#smid"/></svg></button><button aria-label="控制点"><svg><use href="#stan"/></svg></button><button aria-label="交点"><svg><use href="#sint"/></svg></button><button aria-label="圆心"><svg><use href="#scen"/></svg></button><button aria-label="象限点"><svg><use href="#squad"/></svg></button><button aria-label="现有点"><svg><use href="#spt"/></svg></button><button aria-label="曲线上的点"><svg><use href="#son"/></svg></button><button aria-label="面上的点"><svg><use href="#sface"/></svg></button><s></s><button aria-label="实体"><svg><use href="#cube"/></svg></button>
</div>
</div>

<div class="status"><p>输入新的定位值</p><output>边 <b>/</b> 块<b>(1)</b></output></div>

<main>
<aside class="tabs">
<button aria-label="装配导航器"><svg><use href="#tasm"/></svg></button><button aria-label="约束导航器"><svg><use href="#tcon"/></svg></button><button class="on" aria-label="部件导航器"><svg><use href="#tpart"/></svg></button><button aria-label="重用库"><svg><use href="#tbooks"/></svg></button>
<button class="gap" aria-label="HD3D"><svg><use href="#tinfo"/></svg></button><button class="gap" aria-label="浏览器"><svg><use href="#tweb"/></svg></button><button class="gap" aria-label="历史记录"><svg><use href="#clock"/></svg></button>
<button aria-label="材料"><svg><use href="#tpal"/></svg></button><button aria-label="向导"><svg><use href="#twand"/></svg></button><button aria-label="加工"><svg><use href="#tmach"/></svg></button><button aria-label="角色"><svg><use href="#tusers"/></svg></button><button aria-label="场景"><svg><use href="#tbook"/></svg></button><button aria-label="布局"><svg><use href="#tgrid"/></svg></button><button aria-label="更多"></button>
</aside>
<section class="panel">
<h2><svg viewBox="0 0 24 24"><path d="M6 13L13 4l8 1-2 9-7 5z" fill="#e6d44c" stroke="#111" stroke-width="3"/><path d="M9 14l-6 6" stroke="#111" stroke-width="3"/></svg>部件导航器</h2>
<table>
<thead><tr><th>名称 <svg viewBox="0 0 10 6"><path d="M0 6l5-6 5 6z" fill="#111"/></svg></th><th>附注</th></tr></thead>
<tbody>
<tr><td><div class="n"><i class="ln"></i><svg><use href="#clock"/></svg>历史记录模式</div></td><td></td></tr>
<tr><td><div class="n"><i class="ex">+</i><svg><use href="#views"/></svg>模型视图</div></td><td></td></tr>
<tr><td><div class="n"><i class="ex">+</i><svg class="tk"><use href="#tick"/></svg><svg><use href="#camera"/></svg>摄像机</div></td><td></td></tr>
<tr><td><div class="n"><i class="ln"></i><svg><use href="#folder2"/></svg>用户表达式</div></td><td></td></tr>
<tr><td><div class="n"><i class="ex">−</i><svg><use href="#folder"/></svg>模型历史记录</div></td><td></td></tr>
<tr><td><label class="k dim"><input type="checkbox" checked><svg><use href="#csys"/></svg>基准坐标系 (0)</label></td><td></td></tr>
<tr><td><label class="k"><input type="checkbox" checked><svg><use href="#fcube"/></svg>块 <tt>(1)</tt></label></td><td></td></tr>
<tr><td><label class="k"><input type="checkbox" checked><svg><use href="#fboss"/></svg>凸台 <tt>(2)</tt></label></td><td></td></tr>
<tr><td><label class="k dim"><input type="checkbox" checked><svg><use href="#extrude"/></svg>拉伸 <tt>(3)</tt></label></td><td></td></tr>
<tr><td><label class="k"><input type="checkbox" checked><svg><use href="#fpock"/></svg>圆柱形腔体 <tt>(4)</tt></label></td><td></td></tr>
<tr><td><label class="k"><input type="checkbox" checked><svg><use href="#fpock"/></svg>矩形腔体 <tt>(5)</tt></label></td><td></td></tr>
<tr><td><label class="k"><input type="checkbox" checked><svg><use href="#fpad"/></svg>矩形垫块 <tt>(6)</tt></label></td><td></td></tr>
<tr><td><label class="k dim"><input type="checkbox" checked><svg><use href="#extrude"/></svg>拉伸 <tt>(7)</tt></label></td><td></td></tr>
<tr><td><label class="k dim"><input type="checkbox" checked><svg><use href="#sketch"/></svg>草图 <tt>(8) "SKETCH_...</tt></label></td><td></td></tr>
<tr><td><label class="k dim"><input type="checkbox" checked><svg><use href="#pcurve"/></svg>投影曲线 <tt>(9)</tt></label></td><td></td></tr>
<tr><td><label class="k dim"><input type="checkbox" checked><svg><use href="#emboss"/></svg>凸起 <tt>(10)</tt></label></td><td></td></tr>
<tr><td><label class="k dim"><input type="checkbox" checked><svg><use href="#sketch"/></svg>草图 <tt>(11) "SKETCH...</tt></label></td><td></td></tr>
<tr><td><label class="k dim"><input type="checkbox" checked><svg><use href="#pcurve"/></svg>投影曲线 <tt>(12)</tt></label></td><td></td></tr>
<tr><td><label class="k dim"><input type="checkbox" checked><svg><use href="#offset"/></svg>偏置凸起 <tt>(13)</tt></label></td><td></td></tr>
<tr><td><label class="k"><input type="checkbox" checked><svg><use href="#fpock"/></svg>矩形键槽 <tt>(14)</tt></label></td><td></td></tr>
<tr><td></td><td></td></tr><tr><td></td><td></td></tr><tr><td></td><td></td></tr><tr><td></td><td></td></tr><tr><td></td><td></td></tr><tr><td></td><td></td></tr><tr><td></td><td></td></tr><tr><td></td><td></td></tr><tr><td></td><td></td></tr>
</tbody>
</table>
</section>
<section class="view">
<svg viewBox="262 176 606 550" preserveAspectRatio="xMinYMin slice">
<defs>
<linearGradient id="cy" x1="0" y1="0" x2="1" y2="1"><stop offset="0" stop-color="#c6c8c7"/><stop offset=".5" stop-color="#dcdcde"/><stop offset="1" stop-color="#ececee"/></linearGradient>
<linearGradient id="rim" x1="0" y1="0" x2="1" y2="0"><stop offset="0" stop-color="#c9c9c9"/><stop offset=".4" stop-color="#a6a6a6"/><stop offset="1" stop-color="#b4b4b4"/></linearGradient>
<clipPath id="lf"><path d="M537 313L261 643v54l160 30h165z"/></clipPath>
<clipPath id="rf"><path d="M537 313l331 59v354H586z"/></clipPath>
</defs>
<g>
<path d="M262 176h606v17H262z" fill="#b2b3b8"/><path d="M262 193h606v21H262z" fill="#b3b9bb"/><path d="M262 214h606v22H262z" fill="#bcbabd"/><path d="M262 236h606v22H262z" fill="#bdbdbc"/><path d="M262 258h606v21H262z" fill="#babec8"/><path d="M262 279h606v21H262z" fill="#bbc2c6"/><path d="M262 300h606v22H262z" fill="#c5c2c6"/><path d="M262 322h606v21H262z" fill="#c6c6c6"/><path d="M262 343h606v22H262z" fill="#c6c8d0"/><path d="M262 365h606v21H262z" fill="#c6cdd1"/><path d="M262 386h606v22H262z" fill="#cecbce"/><path d="M262 408h606v21H262z" fill="#cfcfcf"/><path d="M262 429h606v22H262z" fill="#ced0d9"/><path d="M262 451h606v21H262z" fill="#ced5d9"/><path d="M262 472h606v22H262z" fill="#d6d3d6"/><path d="M262 494h606v22H262z" fill="#d6d6d6"/><path d="M262 516h606v21H262z" fill="#d5d7e0"/><path d="M262 537h606v22H262z" fill="#d5dbe0"/><path d="M262 559h606v21H262z" fill="#dddbde"/><path d="M262 580h606v22H262z" fill="#dddedd"/><path d="M262 602h606v22H262z" fill="#dddee7"/><path d="M262 624h606v102H262z" fill="#dde2e7"/>
</g>
<g clip-path="url(#lf)"><path d="M262 300h340v140H262z" fill="#cccacf"/><path d="M262 440h340v151H262z" fill="#cdcdcd"/><path d="M262 591h340v21H262z" fill="#cccdd4"/><path d="M262 612h340v21H262z" fill="#ccd0d5"/><path d="M262 633h340v93H262z" fill="#d5d3d6"/></g>
<g clip-path="url(#rf)"><path d="M530 300h338v60H530z" fill="#c3c3c3"/><path d="M530 350h338v90H530z" fill="#bdbdbd"/><path d="M530 440h338v23H530z" fill="#b9bbc5"/><path d="M530 463h338v21H530z" fill="#b9c0c4"/><path d="M530 484h338v150H530z" fill="#c5c3c6"/><path d="M530 634h338v92H530z" fill="#c6c7c6"/></g>
<path d="M262 697l160 29H262z" fill="#929093"/>
<path d="M262 643L537 313l331 59M262 697l160 29" fill="none" stroke="#383838"/>
<path d="M537 313l49 413" stroke="#929292"/>
<path d="M506 350l294 52" stroke="#2b3c48"/>
<path d="M506 350l24 2-3 5zM800 402l-22-7-3 5z" fill="#0b2537"/>
<path d="M805 395l-83 100" stroke="#347a80"/>
<path d="M805 395l-83 100" stroke="#1b4650" stroke-dasharray="5 4" stroke-width=".6"/>
<g fill="none" stroke="#3034ee" stroke-width="1.200" stroke-linecap="round"><path d="M637 359l3 1M635 365l3 1M656 357l-11 10 11 4M656 357l-5 15M674 361l-9-2-3 6c7-1 10 2 7 6-3 3-7 2-10 0M671 374c-3 0-4 3-1 3s3-3 1-3M685 363c4-3 11-1 9 3-1 3-5 3-7 3 5 0 7 3 3 7-4 2-8 1-10-2"/></g>
<path d="M674 511v12c2 20 69 21 71 1v-14c-2 22-69 21-71 1z" fill="url(#rim)" stroke="#858585"/>
<ellipse cx="709" cy="510" rx="35" ry="17" fill="#c9c9c9"/><path d="M679 518c12-15 48-15 60 0-14 11-46 11-60 0z" fill="#dfdee0"/>
<ellipse cx="709" cy="510" rx="35" ry="17" fill="none" stroke="#343434"/>
<path d="M690 525v10M704 527v11M727 525v10" stroke="#8a8a8a" stroke-width=".6"/>
<path d="M677 504l64 12" stroke="#12df24" stroke-width="2" stroke-dasharray="13 5 6 4"/><path d="M722 495l-25 31" stroke="#12df24" stroke-width="2" stroke-dasharray="10 4 7 4"/>
<path d="M850 620l18-25v17z" fill="#bdbfbe"/>
<path d="M868 612c-22 4-36 22-36 45 0 25 16 48 36 62z" fill="url(#cy)" stroke="#858585"/>
</svg>
</section>
</main>
</div>

<svg class="ribbon" viewBox="0 0 155 155" aria-hidden="true">
<path d="M105 36h23v16h-23z" fill="#eef3fb"/><text x="99" y="48" class="com">.COM</text>
<path d="M5 5h150L5 154z" fill="#f00"/>
<text class="sug" transform="translate(20 66) rotate(-41)">9SUG</text>
<text class="slogan" transform="translate(20 131) rotate(-44)">学UG就上UG网</text>
</svg>

<form class="dialog">
<header><h3>创建表达式</h3><button type="button" aria-label="关闭"><svg viewBox="0 0 16 16"><path d="M4 3l8 10M12 3L4 13" stroke="#fff" stroke-width="2"/></svg></button></header>
<div class="field"><label for="val">p74</label><div class="box"><input id="val" value="50"><span>mm</span><button type="button" aria-label="单位"><svg viewBox="0 0 16 16"><path d="M5 2h6v5h4l-7 8-7-8h4z" fill="#0c1a30"/></svg></button></div></div>
<div class="acts"><button type="button" class="ok">确定</button><button type="button">后视图</button><button type="button">取消</button></div>
<svg class="cursor" viewBox="0 0 26 28"><circle cx="13" cy="14" r="13" fill="#2f8f35" fill-opacity=".8"/><path d="M13 3l5 6h-4v11h4l-5 6-5-6h4V9H8z" fill="#fff" stroke="#222"/></svg>
</form>
</body>
</html>
```
FILE: styles.css
```css
* { box-sizing: border-box; }
html, body { height: 100%; margin: 0; }
body { font: 11px/16px "Noto Sans CJK SC", "Liberation Sans", sans-serif; color: #111; overflow: hidden; background: #dcdade; }
h1, h2, h3, p { margin: 0; font-weight: normal; }
button { padding: 0; border: 0; background: none; font: inherit; color: inherit; }
.defs { position: absolute; width: 0; height: 0; }
.app { display: flex; flex-direction: column; height: 100vh; overflow: hidden; }

.title { flex: none; height: 18px; overflow: hidden; padding-left: 16px; background: linear-gradient(#8b8d90 0, #4b4d50 5px, #1a1c1a 6px); }
.title h1 { font-size: 14px; line-height: 17px; color: #e6e6e6; white-space: nowrap; }

.menu { flex: none; display: flex; gap: 12px; height: 21px; padding-left: 117px; background: #e6e4e8; line-height: 21px; white-space: nowrap; border-bottom: 1px solid #c6c5c8; }
.menu a { color: #111; text-decoration: none; }
.menu i { font: 12px "Liberation Serif", serif; }
.menu b { font: 9px "Liberation Mono", monospace; }

.bar { flex: none; display: flex; align-items: center; height: 31px; background: linear-gradient(#dfdde0, #d0cfd1); border-bottom: 1px solid #aaa9ab; box-shadow: inset 0 1px #eeecef; overflow: hidden; }
.bar button { flex: 28 1 0; min-width: 0; display: flex; justify-content: center; align-items: center; }
.bar svg { width: 22px; height: 22px; flex: none; }
.bar em { flex: 10 1 0; min-width: 0; display: flex; justify-content: center; }
.bar em::after { content: ""; border: 3px solid transparent; border-top-color: #111; border-bottom: 0; }
.bar em.low { padding-top: 14px; }
.bar s { flex: 4 1 0; min-width: 0; align-self: stretch; margin: 1px 0; background: linear-gradient(#f2f1f3, #f2f1f3) center / 1px 100% no-repeat; }
.bar s.grip { flex: 6 1 0; margin: 6px 0; background: repeating-linear-gradient(#999 0 2px, transparent 2px 4px) center / 2px 100% no-repeat; }
.one { padding-left: 90px; }
.bar .finder { flex: none; width: 56px; font-size: 11px; white-space: nowrap; }
.two { padding-left: 67px; margin-right: -7px; }
.glyph { font: bold 24px "Liberation Serif", serif; }
.three { height: 30px; margin-right: -8px; background: linear-gradient(#d3d2d4, #c5c4c6); }
.bar .finish { flex: none; justify-content: flex-end; width: 103px; padding-right: 2px; gap: 3px; color: #858585; }
.four { height: 25px; background: linear-gradient(#c6c5c7, #d6d5d7); }
.combo { flex: none; position: relative; width: 98px; height: 15px; margin-right: 8px; border: 1px solid #999; border-radius: 3px; background: #d9d8da; }
.combo.wide { width: 104px; margin-right: 3px; }
.combo select { appearance: none; display: block; width: 100%; height: 13px; padding: 0; border: 0; background: none; font: 11px/13px "Noto Sans CJK SC", sans-serif; color: #8d8d8d; opacity: 1; text-shadow: 1px 1px #fff; }
.combo::after { content: ""; position: absolute; right: 3px; top: 4px; border: 5px solid transparent; border-top: 6px solid #8b8b8b; border-bottom: 0; pointer-events: none; }
.combo::before { content: ""; position: absolute; right: 0; top: 0; width: 15px; height: 13px; border-left: 1px solid #aaa; background: #e2e1e3; }
.snaps { flex: 0 1 452px; display: flex; align-items: center; height: 100%; }
.snaps button { flex: 21 1 0; }
.snaps svg { width: 15px; height: 15px; }
.snaps em { flex: 8 1 0; }
.bar.four s { flex: 6 1 0; }

.status { flex: none; display: flex; justify-content: space-between; height: 20px; line-height: 18px; white-space: nowrap; background: #dfdde1; border-bottom: 2px solid #a9a8aa; }
.status p, .status output { font-weight: bold; }
.status output { flex: none; padding-left: 3px; border-left: 1px solid #aaa; }
.status b { font: bold 10px "Liberation Mono", monospace; }

main { flex: 1; min-height: 0; display: flex; overflow: hidden; }
.tabs { flex: none; width: 24px; padding-top: 14px; display: flex; flex-direction: column; background: #a3a2a5; overflow: hidden; }
.tabs button { flex: none; height: 36px; margin-bottom: 1px; border: 1px solid #6f6f72; border-right: 0; border-radius: 4px 0 0 4px; background: linear-gradient(90deg, #dddce0, #c6c5c9); box-shadow: inset 1px 1px #f4f4f6; display: flex; justify-content: center; align-items: center; }
.tabs button:nth-child(even) { margin-bottom: 2px; }
.tabs .gap { margin: 10px 0 2px; }
.tabs .on { background: #ebeaee; border-color: #ebeaee; }
.tabs svg { width: 21px; height: 22px; }

.panel { flex: none; width: 238px; padding: 8px 9px 0; background: #ebeaee; border-right: 2px solid #737376; overflow: hidden; }
.panel h2 { display: flex; align-items: center; gap: 11px; height: 20px; margin: 0 0 3px 4px; font-size: 12px; font-weight: bold; line-height: 20px; }
.panel h2 svg { width: 11px; height: 11px; }
table { width: 100%; table-layout: fixed; border-collapse: separate; border-spacing: 0; border: 1px solid #77777a; background: #fff; }
th { height: 15px; padding: 0 0 0 6px; text-align: left; font-weight: normal; line-height: 14px; background: linear-gradient(#f4f3f6, #dddce0); border-right: 1px solid #bbb; }
th:last-child, td:last-child { width: 38px; padding-left: 5px; border-right: 0; }
th svg { width: 9px; height: 6px; margin: 0 0 1px 9px; }
td { height: 18px; padding: 0; border-bottom: 1px solid #e0e0e1; border-right: 1px solid #e0e0e1; }
tbody tr:nth-child(6n) td { height: 17px; }
tbody tr:nth-child(even) { background: #f5f5f5; }
.n, .k { display: flex; align-items: center; height: 16px; white-space: nowrap; overflow: hidden; }
.n svg, .k svg { flex: none; width: 14px; height: 14px; margin-right: 2px; }
.n { padding-left: 4px; gap: 1px; }
.n i { flex: none; width: 9px; height: 9px; margin-right: 3px; font: 9px/7px "Liberation Mono", monospace; text-align: center; }
.n .ex { border: 1px solid #8b8b8b; background: #fff; }
.n .ln { border-left: 1px dotted #999; border-top: 1px dotted #999; margin-left: 4px; width: 5px; }
.n svg.tk { width: 12px; height: 13px; margin-right: 0; }
.k { margin-left: 25px; padding-left: 10px; background: repeating-linear-gradient(90deg, #aaa 0 1px, transparent 1px 2px) 0 8px / 8px 1px no-repeat; border-left: 1px dotted #aaa; }
.k input { appearance: none; flex: none; width: 12px; height: 12px; margin: 0 1px 0 0; border: 1px solid #222; background: #fff; position: relative; }
.k input::after { content: ""; position: absolute; left: 3px; top: 0; width: 4px; height: 7px; border: solid #10a020; border-width: 0 2px 2px 0; transform: rotate(40deg); }
.k.dim { color: #8e8e8e; }
tt { font: 9px/16px "Liberation Mono", monospace; margin-left: 6px; white-space: pre; }

.view { flex: 1; min-width: 0; }
.view svg { display: block; width: 100%; height: 100%; }

.ribbon { position: absolute; left: 0; top: 0; width: 155px; height: 155px; pointer-events: none; }
.com { font: bold 9px "Liberation Sans", sans-serif; fill: #2a7bd0; }
.sug { font: 500 26px "Noto Sans", sans-serif; fill: #000; stroke: #000; stroke-width: 1px; }
.slogan { font: bold 22px "Noto Sans CJK SC", sans-serif; fill: #fff; }

.dialog { position: absolute; left: 126px; top: 247px; width: 259px; padding-bottom: 8px; background: #151615; border-radius: 6px; border: 1px solid #2c2d2d; }
.dialog header { display: flex; justify-content: space-between; align-items: center; height: 21px; padding: 0 2px 0 7px; border-radius: 5px 5px 0 0; background: linear-gradient(#707274 0, #444648 8px, #1a1c1a 9px); }
.dialog h3 { font-size: 13px; color: #dfe3e8; padding-top: 2px; }
.dialog header button { width: 16px; height: 16px; border: 1px solid #f0b8a0; border-radius: 3px; background: linear-gradient(#f39a72, #d23e16); }
.dialog header svg { display: block; width: 14px; height: 14px; }
.field { display: flex; justify-content: space-between; align-items: center; height: 30px; padding: 0 9px 0 8px; background: #ebeaee; }
.field label, .box span { font: 9px "Liberation Mono", monospace; }
.box { display: flex; align-items: center; width: 95px; height: 17px; border: 2px solid #77777a; border-radius: 4px; background: #e6e5e9; overflow: hidden; }
.box input { width: 45px; height: 13px; padding: 0; border: 0; font: 10px/12px "Liberation Sans", sans-serif; color: #d6ecff; background: linear-gradient(90deg, #3399f4 12px, #fff 12px); }
.box span { flex: 1; padding-left: 5px; }
.box button { width: 15px; height: 13px; background: linear-gradient(#b4d6fa, #3f86dc); }
.box button svg { display: block; width: 13px; height: 13px; margin: auto; }
.acts { display: flex; justify-content: flex-end; gap: 6px; height: 27px; padding: 5px 14px 5px 0; background: linear-gradient(#c4c3c6 1px, #f0eff2 1px, #dddce0); }
.acts button { width: 57px; height: 17px; line-height: 14px; border: 1px solid #6f6f72; border-radius: 3px; background: linear-gradient(#fafafb, #d6d5d8 50%, #eeeef0); box-shadow: inset 0 0 0 1px #aaaaad; }
.acts .ok { border-color: #1c5620; background: linear-gradient(#cdeec0, #5cae4c 50%, #a5e890); box-shadow: inset 0 0 0 1px #3c8038; }
.cursor { position: absolute; left: 75px; top: 65px; width: 26px; height: 28px; pointer-events: none; }
```
